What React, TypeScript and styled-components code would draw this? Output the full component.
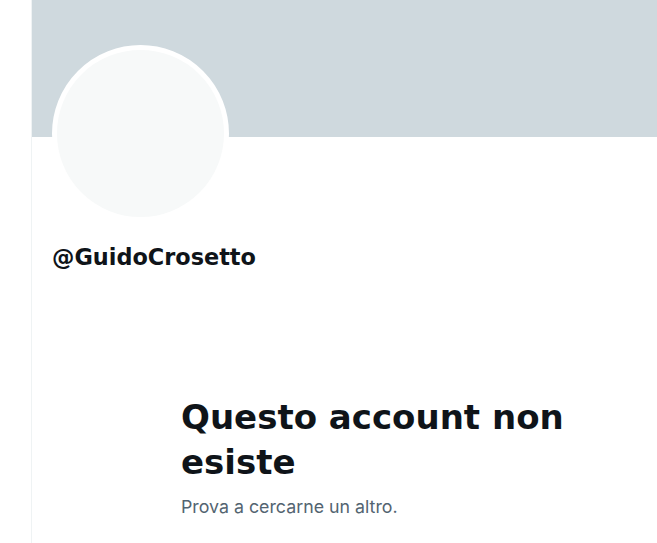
import * as React from 'react';
import styled, { createGlobalStyle } from 'styled-components';

const GlobalStyle = createGlobalStyle`
    html, body {
        margin: 0;
        padding: 0;
        background: #ffffff;
        font-family: Inter, "Noto Sans", Arial, sans-serif;
        color: #0f1419;
    }
`;

const Page = styled.div`
    display: flex;
    min-height: 543px;
`;

const SideGutter = styled.div`
    width: 31px;
    flex-shrink: 0;
`;

const MainColumn = styled.main`
    flex: 1;
    display: flex;
    flex-direction: column;
    border-left: 1px solid #eff3f4;
    min-height: 543px;
`;

const Banner = styled.div`
    height: 137px;
    background-color: #cfd9de;
`;

const ProfileHeader = styled.div`
    display: flex;
    flex-direction: column;
    padding: 0 20px;
`;

const Avatar = styled.div`
    width: 177px;
    height: 177px;
    box-sizing: border-box;
    margin-top: -92px;
    border-radius: 50%;
    border: 5px solid #ffffff;
    background-color: #f7f9f9;
`;

const Handle = styled.h2`
    margin: 21px 0 0;
    font-family: "DejaVu Sans", Verdana, sans-serif;
    font-size: 22.4px;
    font-weight: 700;
    line-height: 28px;
    color: #0f1419;
`;

const EmptyState = styled.section`
    display: flex;
    flex-direction: column;
    padding: 124px 0 0 149px;
    max-width: 400px;
`;

const Title = styled.h1`
    margin: 0;
    font-family: "DejaVu Sans", Verdana, sans-serif;
    font-size: 34px;
    font-weight: 700;
    line-height: 45px;
    color: #0f1419;
`;

const Subtitle = styled.p`
    margin: 10px 0 0;
    font-family: Inter, "Noto Sans", Arial, sans-serif;
    font-size: 17.8px;
    line-height: 24px;
    color: #536471;
`;

export default function App() {
    return (
        <>
            <GlobalStyle />
            <Page>
                <SideGutter />
                <MainColumn>
                    <Banner />
                    <ProfileHeader>
                        <Avatar />
                        <Handle>@GuidoCrosetto</Handle>
                    </ProfileHeader>
                    <EmptyState>
                        <Title>Questo account non esiste</Title>
                        <Subtitle>Prova a cercarne un altro.</Subtitle>
                    </EmptyState>
                </MainColumn>
            </Page>
        </>
    );
}
